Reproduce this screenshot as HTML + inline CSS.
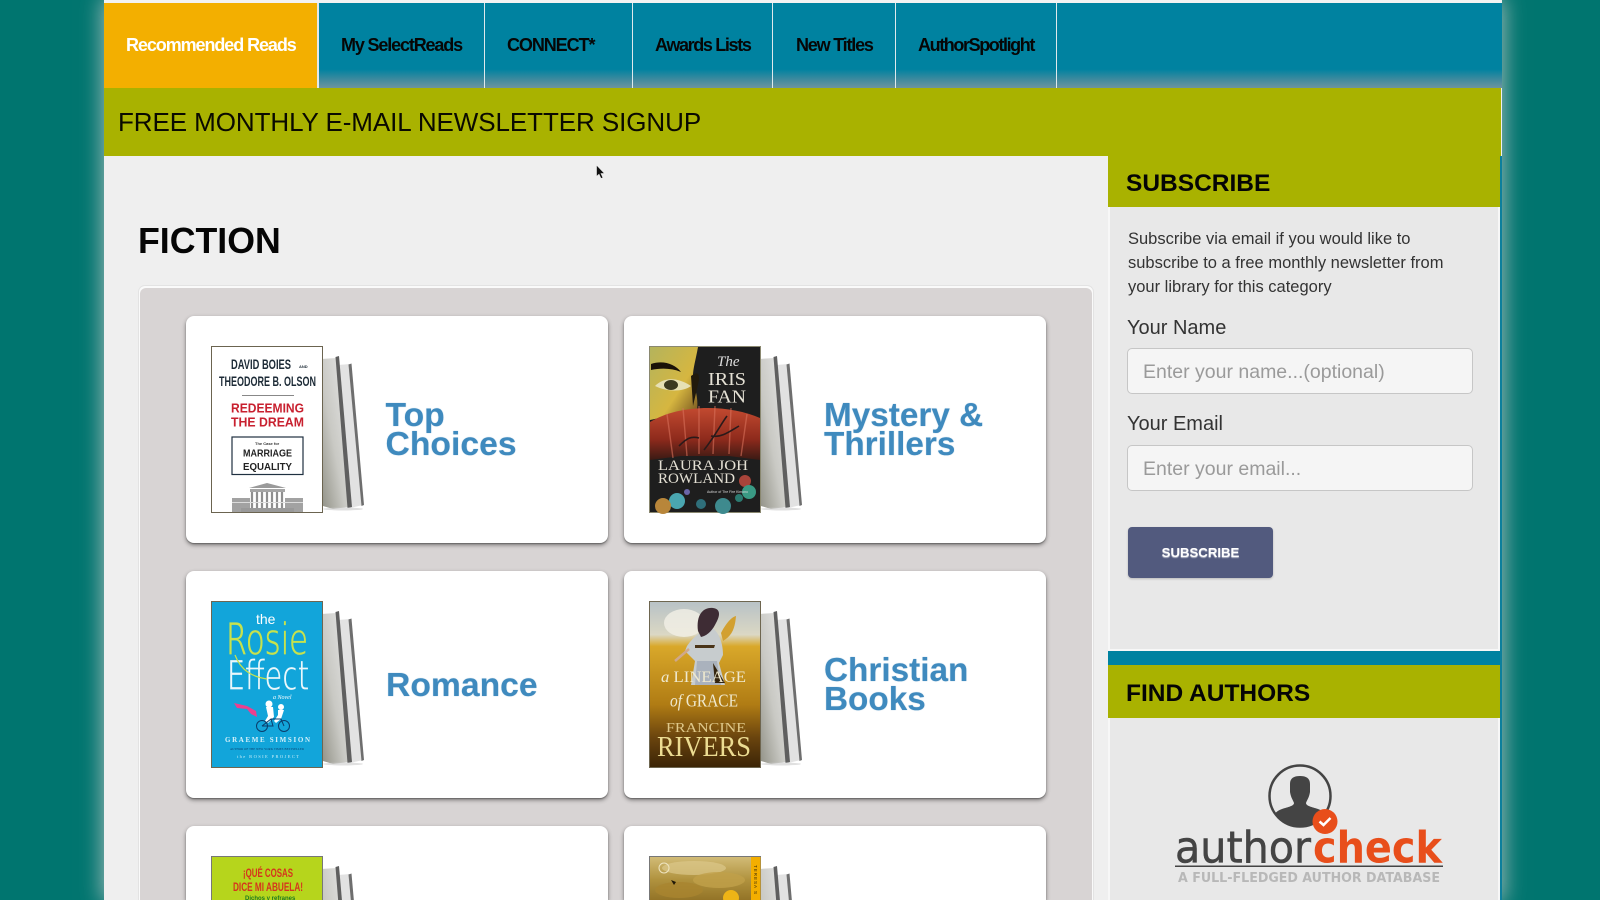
<!DOCTYPE html>
<html lang="en"><head><meta charset="utf-8"><title>Fiction</title>
<style>
*{box-sizing:border-box}
html,body{margin:0;padding:0;width:1600px;height:900px;overflow:hidden;background:#00756f;font-family:"Liberation Sans",Arial,sans-serif}
#root{position:relative;width:1600px;height:900px;overflow:hidden;background:#00756f}
.a{position:absolute;white-space:nowrap}
#wrap{position:absolute;left:104px;top:0;width:1398px;height:900px;background:#efefef;box-shadow:0 0 20px 2px rgba(205,205,205,.75)}
#top{position:absolute;left:104px;top:0;width:1397px;height:4px;background:#f2f2f2}
#nav{position:absolute;left:104px;top:3px;width:1398px;height:85px;background:linear-gradient(#0082a0 0,#0082a0 78%,#3f8a9e 90%,#6d949f 100%)}
#tab{position:absolute;left:104px;top:3px;width:213px;height:85px;background:#f3af00}
.div{position:absolute;top:3px;height:85px;width:1px;background:#dfe9ec}
.nv{position:absolute;top:34px;font-size:18px;line-height:22px;font-weight:bold;color:#060606;letter-spacing:-1.08px;white-space:nowrap}
#ban{position:absolute;left:104px;top:88px;width:1397px;height:68px;background:#a9b200}
#side{position:absolute;left:1108px;top:156px;width:392px;height:744px;background:#e8e8e8;border-left:2px solid #f7f7f7;border-right:2px solid #f7f7f7}
#blue{position:absolute;left:1500px;top:156px;width:2px;height:744px;background:#0c7f9c}
.ol{position:absolute;left:1108px;width:392px;background:#a9b200}
.hd{position:absolute;left:1126px;font-weight:bold;color:#050505;white-space:nowrap}
#panelo{position:absolute;left:138px;top:285px;width:956px;height:615px;background:#fafafa;border:1px solid #e3e3e3;border-bottom:0;border-radius:7px 7px 0 0}
#panel{position:absolute;left:140px;top:288px;width:952px;height:612px;background:#d8d4d4;border-radius:6px 6px 0 0}
.card{position:absolute;width:422px;height:227px;background:#fff;border-radius:8px;box-shadow:0 1px 1px rgba(0,0,0,.25),0 2px 4px rgba(0,0,0,.45)}
.card.cut{height:74px;overflow:hidden;border-radius:8px 8px 0 0}
.bk{position:absolute;left:25px;top:30px;width:156px;height:170px;overflow:visible}
.cut .bk{height:44px;overflow:hidden}
.cv{filter:blur(.35px)}
.t{position:absolute;font-size:33.700px;line-height:29px;font-weight:bold;color:#3f8abe;white-space:nowrap;text-shadow:0 0 1px rgba(63,138,190,.5)}
.inp{position:absolute;left:1127px;width:346px;height:46px;background:#f5f5f5;border:1px solid #c6c6c6;border-radius:5px;font-size:19.500px;line-height:46px;padding-left:15px;color:#9a9a9a;white-space:nowrap}
.lb{position:absolute;left:1127px;font-size:20px;line-height:24px;color:#333;white-space:nowrap}
</style></head><body>
<div id="root">
<svg width="0" height="0" style="position:absolute"><defs>
<linearGradient id="pg" x1="0" y1="1" x2="1" y2="0"><stop offset="0" stop-color="#8f8f84"/><stop offset=".45" stop-color="#c9c9c4"/><stop offset="1" stop-color="#e8e8e8"/></linearGradient>
<symbol id="pages" viewBox="0 0 156 170" overflow="visible">
<polygon points="127,19 139,18 152,159 139,162" fill="#e2e2e2"/>
<polygon points="137.500,18.500 140.500,17.500 153,159 150.500,160" fill="#6e6e6e"/>
<polygon points="110,13 125,12 137,161 122,163 112,160" fill="url(#pg)"/>
<polygon points="124.500,11 128,10 141,161 136.500,162" fill="#5f5f5f"/>
<ellipse cx="132" cy="163" rx="20" ry="1.500" fill="#ccc" opacity=".6"/>
</symbol>
<linearGradient id="fan" x1="0" y1="0" x2="0" y2="1"><stop offset="0" stop-color="#c24a30"/><stop offset=".6" stop-color="#8e2a1c"/><stop offset="1" stop-color="#3a1a14"/></linearGradient>
<linearGradient id="face" x1="0" y1="0" x2="1" y2="1"><stop offset="0" stop-color="#b4b45c"/><stop offset=".6" stop-color="#d6b640"/><stop offset="1" stop-color="#6b4a1c"/></linearGradient>
<linearGradient id="field" x1="0" y1="0" x2="0" y2="1"><stop offset="0" stop-color="#b8c2c6"/><stop offset=".2" stop-color="#dbd8c4"/><stop offset=".27" stop-color="#d9a82a"/><stop offset=".62" stop-color="#b07c14"/><stop offset=".82" stop-color="#6a440e"/><stop offset="1" stop-color="#3b2406"/></linearGradient>
<linearGradient id="cloud" x1="0" y1="0" x2="0" y2="1"><stop offset="0" stop-color="#d2bc78"/><stop offset=".14" stop-color="#b0923e"/><stop offset=".3" stop-color="#8a6a20"/><stop offset="1" stop-color="#4a3208"/></linearGradient>
</defs></svg>

<div id="wrap"></div>
<div id="top"></div>
<div id="nav"></div>
<div id="tab"></div>
<div class="div" style="left:317px;width:2px"></div><div class="div" style="left:484px"></div><div class="div" style="left:632px"></div><div class="div" style="left:772px"></div><div class="div" style="left:895px"></div><div class="div" style="left:1056px"></div>
<div class="nv" style="left:126px;color:#fff">Recommended Reads</div>
<div class="nv" style="left:341px;letter-spacing:-1.15px">My SelectReads</div>
<div class="nv" style="left:507px">CONNECT*</div>
<div class="nv" style="left:655px;letter-spacing:-1.35px">Awards Lists</div>
<div class="nv" style="left:796px;letter-spacing:-1.2px">New Titles</div>
<div class="nv" style="left:918px;letter-spacing:-1.4px">AuthorSpotlight</div>

<div id="ban"></div>
<div class="a" style="left:118px;top:106px;font-size:26px;letter-spacing:-.08px;line-height:32px;color:#0a0a00">FREE MONTHLY E-MAIL NEWSLETTER SIGNUP</div>

<svg class="a" style="left:594px;top:163px" width="14" height="18" viewBox="0 0 14 18"><path d="M2.500 2 L2.500 13.500 L5 11.200 L7 15.500 L9 14.700 L7 10.500 L10.500 10.400 Z" fill="#111" stroke="#eee" stroke-width=".6"/></svg>

<div class="a" style="left:138px;top:220px;font-size:35.700px;line-height:42px;font-weight:bold;color:#050505">FICTION</div>

<div id="panelo"></div>
<div id="panel"></div>

<!-- Card 1 -->
<div class="card" style="left:186px;top:316px">
<svg class="bk" viewBox="0 0 156 170"><use href="#pages" width="156" height="170"/>
<g class="cv" font-family="'Liberation Sans',sans-serif" text-anchor="start">
<rect x=".5" y=".5" width="111" height="166" fill="#fff" stroke="#6b6450"/>
<text x="20" y="23" font-size="14" font-weight="bold" fill="#1c2a36" textLength="60" lengthAdjust="spacingAndGlyphs">DAVID BOIES</text>
<text x="88" y="22" font-size="4" font-weight="bold" fill="#1c2a36">AND</text>
<text x="8" y="40" font-size="14" font-weight="bold" fill="#1c2a36" textLength="97" lengthAdjust="spacingAndGlyphs">THEODORE B. OLSON</text>
<rect x="31" y="49" width="52" height="1" fill="#888"/>
<text x="20" y="66.500" font-size="13" font-weight="bold" fill="#c8202f" textLength="73" lengthAdjust="spacingAndGlyphs">REDEEMING</text>
<text x="20" y="80.500" font-size="13" font-weight="bold" fill="#c8202f" textLength="73" lengthAdjust="spacingAndGlyphs">THE DREAM</text>
<rect x="21" y="91" width="71" height="37.500" fill="#fff" stroke="#1f3040" stroke-width="1.200"/>
<text x="44" y="99" font-size="4" font-weight="bold" fill="#333">The Case for</text>
<text x="32" y="110.500" font-size="10" font-weight="bold" fill="#222" textLength="49" lengthAdjust="spacingAndGlyphs">MARRIAGE</text>
<text x="32" y="124" font-size="10" font-weight="bold" fill="#222" textLength="49" lengthAdjust="spacingAndGlyphs">EQUALITY</text>
<polygon points="38,142 56,137 75,142" fill="#9a9a9a"/>
<rect x="39" y="143" width="35" height="3" fill="#a5a5a5"/>
<path d="M41 146v16M46 146v16M51 146v16M56 146v16M61 146v16M66 146v16M71 146v16" stroke="#8f8f8f" stroke-width="2.200"/>
<rect x="21" y="152" width="18" height="14" fill="#a2a2a2"/><rect x="74" y="152" width="18" height="14" fill="#a2a2a2"/>
<rect x="21" y="156" width="71" height="1" fill="#dcdcdc"/><rect x="30" y="162" width="53" height="4" fill="#999"/>
</g></svg>
<div class="t" style="left:199.500px;top:85px">Top<br>Choices</div>
</div>

<!-- Card 2 -->
<div class="card" style="left:624px;top:316px">
<svg class="bk" viewBox="0 0 156 170"><use href="#pages" width="156" height="170"/>
<g class="cv">
<rect x=".5" y=".5" width="111" height="166" fill="#1e1e1e" stroke="#8a8870"/>
<path d="M1 1H49C46 18 42 28 45 38C48 50 49 55 48 64L1 74Z" fill="url(#face)"/>
<path d="M2 18C14 14 26 18 32 26C22 22 12 22 2 24Z" fill="#1a1208"/>
<path d="M6 40C16 30 30 32 42 40C34 46 18 46 6 40Z" fill="#e6e0b4"/><ellipse cx="22" cy="39" rx="7" ry="5" fill="#3c3a20"/>
<path d="M42 30C48 26 50 26 50 34L44 60Z" fill="#221a0c"/>
<path d="M1 76C30 58 80 58 111 72V114L80 110H32L1 114Z" fill="url(#fan)"/>
<path d="M18 68L24 112M34 62L38 110M50 60V108M66 60L64 108M82 62L80 108M98 68L92 110" stroke="#d8705a" stroke-width="1.400" opacity=".6"/>
<path d="M55 104C66 90 72 78 78 70M62 90C72 92 80 86 90 80M30 100C38 92 42 90 50 92" stroke="#2a1a1a" stroke-width="1.600" fill="none"/>
<text x="68" y="20" font-family="'Liberation Serif',serif" font-style="italic" font-size="15" fill="#ddd">The</text>
<g font-family="'Liberation Serif',serif" fill="#e4e0d4">
<text x="59" y="39" font-size="18" textLength="38" lengthAdjust="spacingAndGlyphs">IRIS</text>
<text x="59" y="56.500" font-size="18" textLength="38" lengthAdjust="spacingAndGlyphs">FAN</text>
<text x="9" y="124" font-size="15" textLength="90" lengthAdjust="spacingAndGlyphs">LAURA JOH</text>
<text x="9" y="137" font-size="15" textLength="77" lengthAdjust="spacingAndGlyphs">ROWLAND</text>
</g>
<circle cx="28" cy="155" r="8" fill="#4aa6b0"/><circle cx="14" cy="160" r="8" fill="#b8863a"/><circle cx="74" cy="160" r="8" fill="#3e8a8e"/><circle cx="96" cy="135" r="6" fill="#a8443a"/><circle cx="100" cy="146" r="7" fill="#3a9a84"/><circle cx="52" cy="158" r="5" fill="#2f6f7a"/><circle cx="38" cy="146" r="3" fill="#6a66a8"/><circle cx="90" cy="152" r="4" fill="#2b7a70"/>
<text x="58" y="147" font-size="3.500" fill="#ddd">Author of The Fire Kimono</text>
</g></svg>
<div class="t" style="left:200px;top:85px;font-size:33.300px">Mystery &amp;<br>Thrillers</div>
</div>

<!-- Card 3 -->
<div class="card" style="left:186px;top:571px">
<svg class="bk" viewBox="0 0 156 170"><use href="#pages" width="156" height="170"/>
<g class="cv">
<rect x=".5" y=".5" width="111" height="166" fill="#12a5da" stroke="#6e6650"/>
<text x="45" y="23" font-family="'Liberation Sans',sans-serif" font-size="14" fill="#fff">the</text>
<text x="15" y="54" font-family="'DejaVu Sans',sans-serif" font-size="45" fill="#c7e24c" stroke="#12a5da" stroke-width="1.200" textLength="82" lengthAdjust="spacingAndGlyphs">Rosie</text>
<text x="16" y="89" font-family="'DejaVu Sans',sans-serif" font-size="42" fill="#e9f7fb" stroke="#12a5da" stroke-width="1.200" textLength="82" lengthAdjust="spacingAndGlyphs">Effect</text>
<path d="M24 54C30 70 42 76 56 78" stroke="#c7e24c" stroke-width="1.200" fill="none"/>
<text x="62" y="98" font-family="'Liberation Serif',serif" font-style="italic" font-size="6" fill="#fff">a Novel</text>
<path d="M23 102L36 105L45 110L46 116L40 113L36 108L26 107Z" fill="#ec3f8f"/>
<circle cx="58" cy="103" r="3.500" fill="#fff"/><circle cx="70" cy="106" r="3" fill="#fff"/>
<path d="M55 106H62L63 116L57 122L54 120L57 115ZM67 109H73L70 118L65 122L63 120L67 114Z" fill="#fff"/>
<g fill="none" stroke="#0a3d6c" stroke-width="1"><circle cx="51" cy="125" r="5.500"/><circle cx="73" cy="125" r="5.500"/><path d="M51 125L60 118H70L73 125M60 118L62 125H51"/></g>
<g font-family="'Liberation Serif',serif" text-anchor="start">
<text x="14" y="141" font-size="7" font-weight="bold" fill="#d6f1fa" textLength="85" lengthAdjust="spacing">GRAEME SIMSION</text>
<text x="19" y="149" font-size="3" fill="#0a3d6c" textLength="74" lengthAdjust="spacing">AUTHOR OF THE NEW YORK TIMES BESTSELLER</text>
<text x="26" y="157" font-size="4.500" fill="#c8eef8" textLength="62" lengthAdjust="spacing">the ROSIE PROJECT</text>
</g></g></svg>
<div class="t" style="left:200px;top:100px">Romance</div>
</div>

<!-- Card 4 -->
<div class="card" style="left:624px;top:571px">
<svg class="bk" viewBox="0 0 156 170"><use href="#pages" width="156" height="170"/>
<g class="cv">
<rect x=".5" y=".5" width="111" height="166" fill="url(#field)" stroke="#6e6650"/>
<ellipse cx="35" cy="22" rx="20" ry="14" fill="#f2f0e6" opacity=".8"/>
<path d="M38 45C44 36 52 30 62 26C72 32 74 46 74 54L70 62L76 84H42L46 60L36 50Z" fill="#c7ccce"/>
<path d="M48 60H68L72 84H46Z" fill="#aab2bd"/>
<path d="M46 44H66L65 47H46Z" fill="#4a3418"/>
<path d="M49 30C47 14 54 6 64 7C72 8 71 15 67 22C64 28 60 34 52 36Z" fill="#3e2c34"/>
<path d="M72 32C76 24 82 16 87 15C86 26 84 34 74 40Z" fill="#d2a030"/>
<path d="M64 62L76 82H66Z" fill="#33240f"/>
<path d="M40 48L26 60" stroke="#cfa88c" stroke-width="2.500"/>
<g font-family="'Liberation Serif',serif" fill="#efe9cf">
<text x="12" y="81" font-size="16" textLength="85" lengthAdjust="spacingAndGlyphs"><tspan font-style="italic">a</tspan> LINEAGE</text>
<text x="21" y="105.500" font-size="18" textLength="68" lengthAdjust="spacingAndGlyphs"><tspan font-style="italic">of</tspan> GRACE</text>
<text x="17" y="131" font-size="13.500" fill="#dfc88a" textLength="80" lengthAdjust="spacingAndGlyphs">FRANCINE</text>
<text x="8" y="155" font-size="29" fill="#ecdc92" textLength="94" lengthAdjust="spacingAndGlyphs">RIVERS</text>
</g></g></svg>
<div class="t" style="left:200px;top:85px;font-size:33.300px">Christian<br>Books</div>
</div>

<!-- Card 5 -->
<div class="card cut" style="left:186px;top:826px">
<svg class="bk" viewBox="0 0 156 44"><use href="#pages" width="156" height="170"/>
<g class="cv" font-family="'Liberation Sans',sans-serif" font-weight="bold">
<rect x=".5" y=".5" width="111" height="166" fill="#b6d51c" stroke="#777"/>
<text x="32" y="21" font-size="12" fill="#d6341c" textLength="50" lengthAdjust="spacingAndGlyphs">¡QUÉ COSAS</text>
<text x="22" y="35" font-size="12" fill="#d6341c" textLength="70" lengthAdjust="spacingAndGlyphs">DICE MI ABUELA!</text>
<text x="34" y="44" font-size="6" fill="#1e7a22">Dichos y refranes</text>
</g></svg>
</div>

<!-- Card 6 -->
<div class="card cut" style="left:624px;top:826px">
<svg class="bk" viewBox="0 0 156 44"><use href="#pages" width="156" height="170"/>
<g class="cv">
<rect x=".5" y=".5" width="111" height="166" fill="url(#cloud)" stroke="#777"/>
<ellipse cx="45" cy="12" rx="32" ry="7" fill="#dcc88a" opacity=".7"/><ellipse cx="70" cy="24" rx="26" ry="8" fill="#c0a04a" opacity=".8"/><ellipse cx="30" cy="34" rx="24" ry="8" fill="#a98430" opacity=".8"/>
<circle cx="15" cy="12" r="5" fill="none" stroke="#eee4c0" stroke-width="1"/>
<path d="M22 24L27 26L25 29Z" fill="#1f1808"/>
<circle cx="82" cy="42" r="8" fill="#eeb416"/>
<rect x="102" y="1" width="9.500" height="166" fill="#f3ae00"/>
<text x="0" y="0" transform="translate(105,9) rotate(90)" font-family="'Liberation Sans',sans-serif" font-size="4.500" fill="#3a2a06" letter-spacing="1">TERESA S</text>
</g></svg>
</div>

<!-- Sidebar -->
<div id="side"></div>
<div id="blue"></div>
<div class="ol" style="top:156px;height:51px"></div>
<div class="hd" style="top:169px;font-size:24.500px;line-height:30px">SUBSCRIBE</div>
<div class="a" style="left:1128px;top:226.500px;font-size:16.500px;line-height:24.200px;color:#333;white-space:normal;width:345px">Subscribe via email if you would like to<br>subscribe to a free monthly newsletter from<br>your library for this category</div>
<div class="lb" style="top:316px">Your Name</div>
<div class="inp" style="top:348px">Enter your name...(optional)</div>
<div class="lb" style="top:411.500px">Your Email</div>
<div class="inp" style="top:445px">Enter your email...</div>
<div class="a" style="left:1128px;top:527px;width:145px;height:51px;background:#525a7e;border-radius:4px;box-shadow:0 1px 2px rgba(0,0,0,.2);color:#fff;font-size:13.200px;font-weight:bold;line-height:51px;text-align:center;text-shadow:0 1px 1px rgba(255,255,255,.6)">SUBSCRIBE</div>
<div class="a" style="left:1108px;top:649px;width:392px;height:2px;background:#f7f7f7"></div>
<div class="a" style="left:1108px;top:651px;width:392px;height:14px;background:#0082a0"></div>
<div class="ol" style="top:665px;height:53px"></div>
<div class="hd" style="top:679px;font-size:24.500px;line-height:30px">FIND AUTHORS</div>

<svg class="a" style="left:1109px;top:718px" width="390" height="182" viewBox="1109 718 390 182">
<defs><clipPath id="cc"><circle cx="1300" cy="796" r="30"/></clipPath></defs>
<circle cx="1300" cy="796" r="30.500" fill="none" stroke="#444" stroke-width="2.500"/>
<g clip-path="url(#cc)"><path d="M1290 784C1290 778 1294 776 1300 776C1306 776 1310 778 1310 784L1310 792C1309 798 1307 800 1306 803C1306 806 1312 807 1318 809C1324 811 1328 815 1332 830H1268C1272 815 1276 811 1282 809C1288 807 1294 806 1294 803C1293 800 1291 798 1290 792Z" fill="#444"/></g>
<circle cx="1325" cy="821.500" r="12.500" fill="#e84e1b"/>
<path d="M1319.500 821.500L1323.500 825L1330.500 818" fill="none" stroke="#fff" stroke-width="2.500"/>
<text x="1175" y="862.500" font-family="'DejaVu Sans',sans-serif" font-size="44" fill="#444" stroke="#444" stroke-width=".5" textLength="136" lengthAdjust="spacingAndGlyphs">author</text>
<text x="1313" y="862.500" font-family="'DejaVu Sans',sans-serif" font-size="44" font-weight="bold" fill="#e84e1b" textLength="129" lengthAdjust="spacingAndGlyphs">check</text>
<rect x="1175" y="865.500" width="268" height="1.500" fill="#444"/>
<text x="1178" y="882" font-family="'DejaVu Sans',sans-serif" font-size="13.500" font-weight="bold" fill="#b8b8b8" textLength="262" lengthAdjust="spacingAndGlyphs">A FULL-FLEDGED AUTHOR DATABASE</text>
</svg>
</div>
</body></html>
